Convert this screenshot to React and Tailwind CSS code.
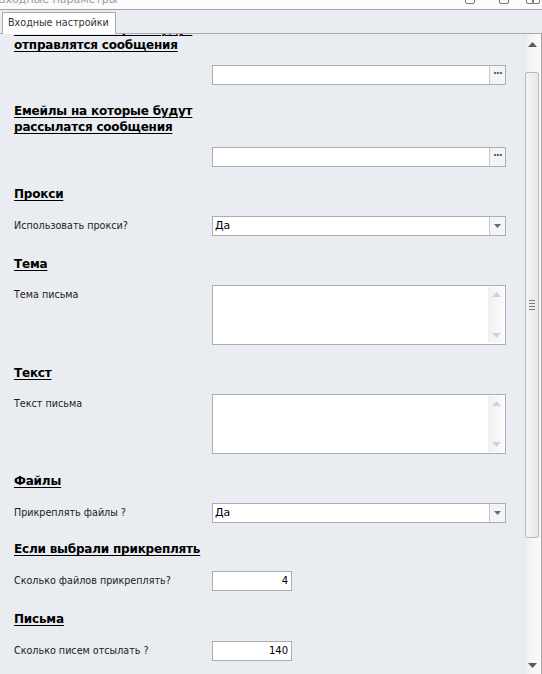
import React from 'react';

const font = { fontFamily: '"DejaVu Sans", Verdana, sans-serif' };

function Heading({ children, className = '' }) {
  return (
    <div className={`pl-[14px] text-[12px] font-bold leading-[16px] tracking-[-0.2px] text-black underline underline-offset-2 ${className}`}>
      {children}
    </div>
  );
}

function Row({ label, children, className = '', top = false }) {
  return (
    <div className={`flex ${top ? 'items-start' : 'items-center'} ${className}`}>
      <div className={`w-[212px] shrink-0 pl-[14px] text-[9.6px] text-[#1b1b1b] ${top ? 'pt-[3px]' : ''}`}>{label}</div>
      {children}
    </div>
  );
}

function Caret({ color = '#6b6b6b' }) {
  return (
    <svg width="7" height="4" viewBox="0 0 7 4">
      <path d="M0 0h7L3.5 4z" fill={color} />
    </svg>
  );
}

function BrowseInput() {
  return (
    <div className="flex h-[20px] w-[294px] border border-[#abadb3] bg-white">
      <div className="flex-1" />
      <div className="flex w-[16px] items-center justify-center border-l border-[#c4c6cb] bg-[#f3f4f6] pb-[2px] text-[10px] font-bold leading-none tracking-[-1px] text-[#555]">
        ···
      </div>
    </div>
  );
}

function Select({ value }) {
  return (
    <div className="flex h-[20px] w-[294px] border border-[#abadb3] bg-white">
      <div className="flex-1 pl-[2px] text-[11px] leading-[18px] text-black">{value}</div>
      <div className="flex w-[16px] items-center justify-center border-l border-[#c4c6cb] bg-[#f3f4f6]">
        <Caret />
      </div>
    </div>
  );
}

function TextArea() {
  return (
    <div className="flex h-[60px] w-[294px] border border-[#abadb3] bg-white">
      <div className="flex-1" />
      <div className="my-[1px] mr-[1px] flex w-[16px] flex-col items-center justify-between bg-gradient-to-r from-[#f0f0f0] to-[#fbfbfb] py-[5px]">
        <svg width="9" height="5" viewBox="0 0 9 5"><path d="M0 5h9L4.5 0z" fill="#cfd2d6" /></svg>
        <svg width="9" height="5" viewBox="0 0 9 5"><path d="M0 0h9L4.5 5z" fill="#cfd2d6" /></svg>
      </div>
    </div>
  );
}

function NumberInput({ value }) {
  return (
    <div className="h-[20px] w-[80px] border border-[#abadb3] bg-white pr-[3px] text-right text-[10px] leading-[18px] text-black">
      {value}
    </div>
  );
}

function Scrollbar() {
  return (
    <div className="flex w-[18px] shrink-0 flex-col items-center bg-gradient-to-r from-[#e6e9ee] via-[#f6f6f7] to-[#fafafa]">
      <div className="mt-[6px] flex h-[8px] items-center">
        <svg width="9" height="5" viewBox="0 0 9 5"><path d="M0 5h9L4.5 0z" fill="#5a5a5a" /></svg>
      </div>
      <div className="mt-[24px] flex h-[466px] w-[14px] items-center justify-center rounded-[2px] border border-[#b7b9bd] bg-gradient-to-r from-[#f4f4f5] to-[#e6e7e9]">
        <div className="flex flex-col gap-[2px]">
          <div className="h-px w-[6px] bg-[#7c7c7c]" />
          <div className="h-px w-[6px] bg-[#7c7c7c]" />
          <div className="h-px w-[6px] bg-[#7c7c7c]" />
          <div className="h-px w-[6px] bg-[#7c7c7c]" />
        </div>
      </div>
      <div className="mt-auto mb-[6px]">
        <svg width="9" height="5" viewBox="0 0 9 5"><path d="M0 0h9L4.5 5z" fill="#5a5a5a" /></svg>
      </div>
    </div>
  );
}

export default function App() {
  return (
    <div className="flex h-[674px] w-[542px] flex-col overflow-hidden bg-[#e9ecf1]" style={font}>
      {/* window title strip, mostly cut off */}
      <div className="relative h-[10px] shrink-0 overflow-hidden border-b border-[#9fa3a8] bg-[#fbfbfb]">
        <div className="absolute left-[-2px] top-[-8px] whitespace-nowrap text-[11px] text-[#9a9a9a]">Входные параметры</div>
        <div className="absolute left-[465px] top-[-6px] h-[10px] w-[10px] rounded-[2px] border border-[#7a7a7a]" />
        <div className="absolute left-[499px] top-[-6px] h-[10px] w-[10px] rounded-[2px] border border-[#7a7a7a]" />
        <div className="absolute left-[526px] top-[-6px] h-[10px] w-[8px] rounded-[2px] border border-[#7a7a7a]" />
        <div className="absolute left-[532px] top-[-6px] h-[10px] w-[8px] rounded-[2px] border border-[#7a7a7a]" />
      </div>

      {/* tab strip */}
      <div className="flex h-[23px] shrink-0 items-end pl-[2px]">
        <div className="relative z-10 -mb-px flex h-[22px] w-[114px] items-center whitespace-nowrap border border-b-0 border-[#a6a9ae] bg-white pl-[5px] text-[9.6px] text-[#333]">
          Входные настройки
        </div>
      </div>

      {/* tab page */}
      <div className="flex min-h-0 flex-1 border-t border-r border-[#a6a9ae]">
        <div className="min-w-0 flex-1 overflow-hidden">
          <div className="mt-[-13px] flex flex-col">
            <Heading>
              Емейлы на которые будут
              <br />
              отправлятся сообщения
            </Heading>
            <Row label="" className="mt-[12px]"><BrowseInput /></Row>

            <Heading className="mt-[18px]">
              Емейлы на которые будут
              <br />
              рассылатся сообщения
            </Heading>
            <Row label="" className="mt-[12px]"><BrowseInput /></Row>

            <Heading className="mt-[19px]">Прокси</Heading>
            <Row label="Использовать прокси?" className="mt-[14px]"><Select value="Да" /></Row>

            <Heading className="mt-[20px]">Тема</Heading>
            <Row label="Тема письма" top className="mt-[13px]"><TextArea /></Row>

            <Heading className="mt-[20px]">Текст</Heading>
            <Row label="Текст письма" top className="mt-[13px]"><TextArea /></Row>

            <Heading className="mt-[19px]">Файлы</Heading>
            <Row label="Прикреплять файлы ?" className="mt-[14px]"><Select value="Да" /></Row>

            <Heading className="mt-[18px]">Если выбрали прикреплять</Heading>
            <Row label="Сколько файлов прикреплять?" className="mt-[14px]"><NumberInput value="4" /></Row>

            <Heading className="mt-[20px]">Письма</Heading>
            <Row label="Сколько писем отсылать ?" className="mt-[14px]"><NumberInput value="140" /></Row>
          </div>
        </div>
        <Scrollbar />
      </div>
    </div>
  );
}
